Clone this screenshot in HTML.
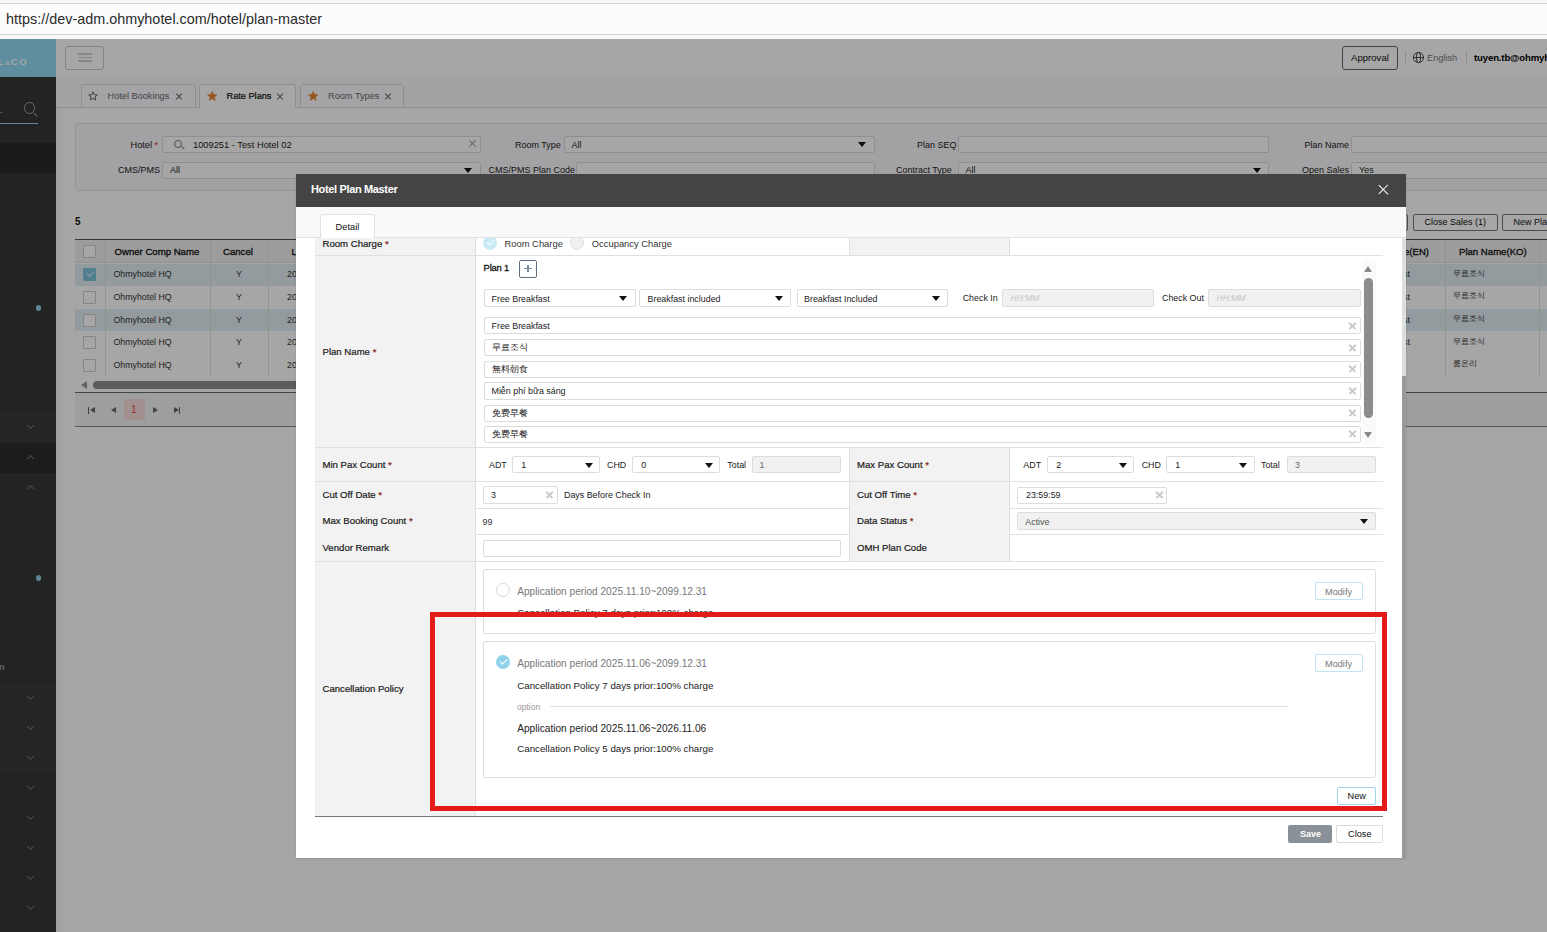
<!DOCTYPE html>
<html><head><meta charset="utf-8">
<style>
*{box-sizing:border-box;margin:0;padding:0}
html,body{width:1547px;height:932px;overflow:hidden;background:#fff;font-family:"Liberation Sans",sans-serif;color:#222}
.a{position:absolute}
.t{position:absolute;white-space:nowrap;line-height:1}
.inp{position:absolute;background:#fff;border:1px solid #dcdcdc;border-radius:2px}
.lb{-webkit-text-stroke:0.2px #1a1a1a;color:#1a1a1a}
.req{color:#e02020}
.tri{position:absolute;width:0;height:0;border-left:4.3px solid transparent;border-right:4.3px solid transparent;border-top:5.6px solid #111;margin-top:0.5px}
</style></head><body>

<!-- APP (background, dimmed by overlay) -->
<div id="app" class="a" style="left:0;top:0;width:1547px;height:932px;background:#fff;overflow:hidden">
<!-- sidebar -->
<div class="a" style="left:0;top:39px;width:56px;height:893px;background:#363636"></div>
<div class="a" style="left:0;top:39px;width:56px;height:38px;background:#92dbf3"></div>
<div class="t" style="left:-2px;top:56.5px;font-size:9.6px;font-weight:700;color:#fafcfd;letter-spacing:1.6px">L<span style="font-size:6px;letter-spacing:1px">&amp;</span>CO</div>
<div class="a" style="left:0;top:123px;width:38px;height:1.3px;background:#8fd0e6"></div>
<div class="a" style="left:23.8px;top:102px;width:11.5px;height:11.5px;border:1.2px solid #a0a0a0;border-radius:50%"></div><div class="a" style="left:0;top:111.5px;width:3px;height:1px;background:#777"></div>
<div class="a" style="left:35px;top:111.5px;width:1.2px;height:5px;background:#a0a0a0;transform:rotate(-45deg)"></div>
<div class="a" style="left:0;top:143px;width:56px;height:30px;background:#2a2a2a"></div>
<div class="a" style="left:35.5px;top:305px;width:5px;height:5.5px;border-radius:50%;background:#8fcde3"></div>
<div class="a" style="left:0;top:413px;width:56px;height:30px;background:#3a3a3a"></div>
<div class="a" style="left:0;top:443px;width:56px;height:30px;background:#2b2b2b"></div>
<div class="a" style="left:35.5px;top:575px;width:5px;height:5.5px;border-radius:50%;background:#8fcde3"></div>
<div class="t" style="left:-1px;top:663px;font-size:9px;font-weight:700;color:#999">n</div>
<div class="a" style="left:0;top:683px;width:56px;height:90px;background:#393939"></div>
<div class="a" style="left:28px;top:423.3px;width:5px;height:5px;border-right:1.2px solid #777;border-bottom:1.2px solid #777;transform:rotate(45deg)"></div>
<div class="a" style="left:28px;top:455.5px;width:5px;height:5px;border-left:1.2px solid #777;border-top:1.2px solid #777;transform:rotate(45deg)"></div>
<div class="a" style="left:28px;top:485.5px;width:5px;height:5px;border-left:1.2px solid #777;border-top:1.2px solid #777;transform:rotate(45deg)"></div>
<div class="a" style="left:28px;top:693.5px;width:5px;height:5px;border-right:1.2px solid #777;border-bottom:1.2px solid #777;transform:rotate(45deg)"></div>
<div class="a" style="left:28px;top:723.5px;width:5px;height:5px;border-right:1.2px solid #777;border-bottom:1.2px solid #777;transform:rotate(45deg)"></div>
<div class="a" style="left:28px;top:753.5px;width:5px;height:5px;border-right:1.2px solid #777;border-bottom:1.2px solid #777;transform:rotate(45deg)"></div>
<div class="a" style="left:28px;top:783.5px;width:5px;height:5px;border-right:1.2px solid #777;border-bottom:1.2px solid #777;transform:rotate(45deg)"></div>
<div class="a" style="left:28px;top:813.5px;width:5px;height:5px;border-right:1.2px solid #777;border-bottom:1.2px solid #777;transform:rotate(45deg)"></div>
<div class="a" style="left:28px;top:843.5px;width:5px;height:5px;border-right:1.2px solid #777;border-bottom:1.2px solid #777;transform:rotate(45deg)"></div>
<div class="a" style="left:28px;top:873.5px;width:5px;height:5px;border-right:1.2px solid #777;border-bottom:1.2px solid #777;transform:rotate(45deg)"></div>
<div class="a" style="left:28px;top:903.5px;width:5px;height:5px;border-right:1.2px solid #777;border-bottom:1.2px solid #777;transform:rotate(45deg)"></div>
<div class="a" style="left:56px;top:77px;width:8px;height:855px;background:linear-gradient(90deg,rgba(0,0,0,0.04),rgba(0,0,0,0))"></div>

<!-- header -->
<div class="a" style="left:65px;top:46px;width:39px;height:24px;border:1px solid #c9c9c9;border-radius:3px"></div>
<div class="a" style="left:78px;top:53px;width:14px;height:1.5px;background:#d0d0d0"></div>
<div class="a" style="left:78px;top:56.6px;width:14px;height:1.5px;background:#d0d0d0"></div>
<div class="a" style="left:78px;top:60.2px;width:14px;height:1.5px;background:#d0d0d0"></div>
<div class="a" style="left:1342px;top:46px;width:56px;height:24px;border:1px solid #666;border-radius:3px"></div>
<div class="t" style="left:1351px;top:53px;font-size:9.6px;color:#111">Approval</div>
<div class="a" style="left:1405px;top:51px;width:1px;height:13px;background:#ddd"></div>
<div class="a" style="left:1413px;top:52px;width:10.5px;height:10.5px;border:1px solid #4a4a4a;border-radius:50%"></div>
<div class="a" style="left:1416px;top:52px;width:4.5px;height:10.5px;border:1px solid #4a4a4a;border-radius:50%"></div>
<div class="a" style="left:1413px;top:56.8px;width:10.5px;height:1px;background:#4a4a4a"></div>
<div class="t" style="left:1427px;top:54px;font-size:9.2px;color:#777">English</div>
<div class="a" style="left:1466px;top:51px;width:1px;height:13px;background:#ddd"></div>
<div class="t" style="left:1474px;top:53px;font-size:9.6px;font-weight:700;color:#000;letter-spacing:-0.15px">tuyen.tb@ohmyhotel.com</div>

<!-- tab bar -->
<div class="a" style="left:57px;top:77px;width:1490px;height:31px;background:#fbf9fc;border-bottom:1px solid #dcdcdc"></div>
<div class="a" style="left:81px;top:84px;width:114.5px;height:24px;background:#fcfbfd;border:1px solid #dcdcdc;border-radius:3px 3px 0 0"></div>
<div class="a" style="left:199px;top:84px;width:97px;height:24px;background:#fff;border:1px solid #dcdcdc;border-bottom:none;border-radius:3px 3px 0 0"></div>
<div class="a" style="left:300px;top:84px;width:104px;height:24px;background:#fcfbfd;border:1px solid #dcdcdc;border-radius:3px 3px 0 0"></div>
<svg class="a" style="left:88px;top:91px" width="10" height="10" viewBox="-0.5 -0.5 11 11"><path d="M5.00,0.40 L6.29,3.62 L9.76,3.85 L7.09,6.08 L7.94,9.45 L5.00,7.60 L2.06,9.45 L2.91,6.08 L0.24,3.85 L3.71,3.62Z" fill="none" stroke="#5a5a5a" stroke-width="1" stroke-linejoin="round"/></svg>
<div class="t" style="left:107.5px;top:92px;font-size:9.2px;color:#6a6a72">Hotel Bookings</div>
<div class="a" style="left:174.5px;top:96.2px;width:8px;height:1px;background:#6a6a6a;transform:rotate(45deg)"></div><div class="a" style="left:174.5px;top:96.2px;width:8px;height:1px;background:#6a6a6a;transform:rotate(-45deg)"></div>
<svg class="a" style="left:206.5px;top:91px" width="10.5" height="10" viewBox="0 0 10 10"><path d="M5.00,0.40 L6.29,3.62 L9.76,3.85 L7.09,6.08 L7.94,9.45 L5.00,7.60 L2.06,9.45 L2.91,6.08 L0.24,3.85 L3.71,3.62Z" fill="#e8812f" stroke="#e8812f" stroke-width="0.6" stroke-linejoin="round"/></svg>
<div class="t" style="left:226.5px;top:92px;font-size:9.2px;color:#111;-webkit-text-stroke:0.2px #111">Rate Plans</div>
<div class="a" style="left:275.5px;top:96.2px;width:8px;height:1px;background:#6a6a6a;transform:rotate(45deg)"></div><div class="a" style="left:275.5px;top:96.2px;width:8px;height:1px;background:#6a6a6a;transform:rotate(-45deg)"></div>
<svg class="a" style="left:307.5px;top:91px" width="10.5" height="10" viewBox="0 0 10 10"><path d="M5.00,0.40 L6.29,3.62 L9.76,3.85 L7.09,6.08 L7.94,9.45 L5.00,7.60 L2.06,9.45 L2.91,6.08 L0.24,3.85 L3.71,3.62Z" fill="#e8812f" stroke="#e8812f" stroke-width="0.6" stroke-linejoin="round"/></svg>
<div class="t" style="left:328px;top:92px;font-size:9.2px;color:#6a6a72">Room Types</div>
<div class="a" style="left:383.5px;top:96.2px;width:8px;height:1px;background:#6a6a6a;transform:rotate(45deg)"></div><div class="a" style="left:383.5px;top:96.2px;width:8px;height:1px;background:#6a6a6a;transform:rotate(-45deg)"></div>

<!-- filter panel -->
<div class="a" style="left:75px;top:123px;width:1500px;height:68px;background:#f9f7fa;border:1px solid #e2e2e2;border-radius:4px"></div>
<div class="t" style="left:130.5px;top:141px;font-size:9.2px;color:#222">Hotel <span class="req">*</span></div>
<div class="inp" style="left:162px;top:135.5px;width:319px;height:17.5px"></div>
<div class="a" style="left:174px;top:139.5px;width:8px;height:8px;border:1px solid #777;border-radius:50%"></div><div class="a" style="left:180.5px;top:147px;width:3.5px;height:1px;background:#777;transform:rotate(45deg)"></div>
<div class="t" style="left:193px;top:141px;font-size:9.3px;color:#222">1009251 - Test Hotel 02</div>
<div class="a" style="left:468.0px;top:143.3px;width:9px;height:1.4px;background:#999;transform:rotate(45deg)"></div><div class="a" style="left:468.0px;top:143.3px;width:9px;height:1.4px;background:#999;transform:rotate(-45deg)"></div>
<div class="t" style="left:118px;top:165.5px;font-size:9px;color:#222">CMS/PMS</div>
<div class="inp" style="left:162px;top:161.5px;width:319px;height:17.5px"></div>
<div class="t" style="left:170px;top:165.5px;font-size:9px;color:#222">All</div>
<div class="tri" style="left:464px;top:167px"></div>
<div class="t" style="left:515px;top:141px;font-size:9px;color:#222">Room Type</div>
<div class="inp" style="left:563.5px;top:135.5px;width:311px;height:17.5px"></div>
<div class="t" style="left:571.5px;top:141px;font-size:9px;color:#222">All</div>
<div class="tri" style="left:858px;top:141px"></div>
<div class="t" style="left:488.5px;top:165.5px;font-size:9px;color:#222">CMS/PMS Plan Code</div>
<div class="inp" style="left:576px;top:161.5px;width:299px;height:17.5px"></div>
<div class="t" style="left:917px;top:141px;font-size:9px;color:#222">Plan SEQ</div>
<div class="inp" style="left:957.5px;top:135.5px;width:311px;height:17.5px"></div>
<div class="t" style="left:896px;top:165.5px;font-size:9px;color:#222">Contract Type</div>
<div class="inp" style="left:957.5px;top:161.5px;width:311px;height:17.5px"></div>
<div class="t" style="left:965.5px;top:165.5px;font-size:9px;color:#222">All</div>
<div class="tri" style="left:1253px;top:167px"></div>
<div class="t" style="left:1304.5px;top:141px;font-size:9px;color:#222">Plan Name</div>
<div class="inp" style="left:1350.5px;top:135.5px;width:300px;height:17.5px"></div>
<div class="t" style="left:1302px;top:165.5px;font-size:9px;color:#222">Open Sales</div>
<div class="inp" style="left:1350.5px;top:161.5px;width:300px;height:17.5px"></div>
<div class="t" style="left:1359px;top:165.5px;font-size:9px;color:#222">Yes</div>

<!-- count + buttons -->
<div class="t" style="left:75px;top:216.5px;font-size:10px;font-weight:700;color:#111">5</div>
<div class="a" style="left:1350px;top:213.5px;width:58px;height:17.5px;border:1px solid #777;border-radius:2px"></div>
<div class="a" style="left:1413px;top:213.5px;width:85px;height:17.5px;border:1px solid #777;border-radius:2px"></div>
<div class="t" style="left:1424.5px;top:217.5px;font-size:9px;color:#111">Close Sales (1)</div>
<div class="a" style="left:1502px;top:213.5px;width:80px;height:17.5px;border:1px solid #777;border-radius:2px"></div>
<div class="t" style="left:1513.5px;top:217.5px;font-size:9px;color:#111">New Plan</div>

<!-- table -->
<div class="a" style="left:75px;top:239px;width:1480px;height:1.2px;background:#555"></div>
<div class="a" style="left:75px;top:240.2px;width:1480px;height:23.3px;background:#f0f0f0;border-bottom:1px solid #e2e2e2"></div>
<div class="a" style="left:75px;top:263.5px;width:1480px;height:22.6px;background:#e3eff4"></div>
<div class="a" style="left:83px;top:268.3px;width:13px;height:13px;background:#7fc3dc;border-radius:1px"></div>
<div class="a" style="left:86.5px;top:270.8px;width:7px;height:4px;border-left:1.3px solid #dff3fa;border-bottom:1.3px solid #dff3fa;transform:rotate(-45deg)"></div>
<div class="t" style="left:113.5px;top:270.3px;font-size:8.8px;color:#333">Ohmyhotel HQ</div>
<div class="t" style="left:236px;top:270.3px;font-size:8.8px;color:#333">Y</div>
<div class="t" style="left:287px;top:270.3px;font-size:8.8px;color:#333">20</div>
<div class="t" style="left:1403px;top:270.3px;font-size:8.8px;color:#333">st</div>
<div class="t" style="left:1453px;top:269.8px;font-size:8.2px;color:#333">무료조식</div>
<div class="a" style="left:75px;top:286.1px;width:1480px;height:22.6px;background:#fff"></div>
<div class="a" style="left:83px;top:290.90000000000003px;width:13px;height:13px;border:1px solid #ccc;background:#fff;border-radius:1px"></div>
<div class="t" style="left:113.5px;top:292.90000000000003px;font-size:8.8px;color:#333">Ohmyhotel HQ</div>
<div class="t" style="left:236px;top:292.90000000000003px;font-size:8.8px;color:#333">Y</div>
<div class="t" style="left:287px;top:292.90000000000003px;font-size:8.8px;color:#333">20</div>
<div class="t" style="left:1403px;top:292.90000000000003px;font-size:8.8px;color:#333">st</div>
<div class="t" style="left:1453px;top:292.40000000000003px;font-size:8.2px;color:#333">무료조식</div>
<div class="a" style="left:75px;top:308.7px;width:1480px;height:22.6px;background:#e3eff4"></div>
<div class="a" style="left:83px;top:313.5px;width:13px;height:13px;border:1px solid #ccc;background:#fff;border-radius:1px"></div>
<div class="t" style="left:113.5px;top:315.5px;font-size:8.8px;color:#333">Ohmyhotel HQ</div>
<div class="t" style="left:236px;top:315.5px;font-size:8.8px;color:#333">Y</div>
<div class="t" style="left:287px;top:315.5px;font-size:8.8px;color:#333">20</div>
<div class="t" style="left:1403px;top:315.5px;font-size:8.8px;color:#333">st</div>
<div class="t" style="left:1453px;top:315.0px;font-size:8.2px;color:#333">무료조식</div>
<div class="a" style="left:75px;top:331.3px;width:1480px;height:22.6px;background:#fff"></div>
<div class="a" style="left:83px;top:336.1px;width:13px;height:13px;border:1px solid #ccc;background:#fff;border-radius:1px"></div>
<div class="t" style="left:113.5px;top:338.1px;font-size:8.8px;color:#333">Ohmyhotel HQ</div>
<div class="t" style="left:236px;top:338.1px;font-size:8.8px;color:#333">Y</div>
<div class="t" style="left:287px;top:338.1px;font-size:8.8px;color:#333">20</div>
<div class="t" style="left:1403px;top:338.1px;font-size:8.8px;color:#333">st</div>
<div class="t" style="left:1453px;top:337.6px;font-size:8.2px;color:#333">무료조식</div>
<div class="a" style="left:75px;top:353.9px;width:1480px;height:22.6px;background:#fff"></div>
<div class="a" style="left:83px;top:358.7px;width:13px;height:13px;border:1px solid #ccc;background:#fff;border-radius:1px"></div>
<div class="t" style="left:113.5px;top:360.7px;font-size:8.8px;color:#333">Ohmyhotel HQ</div>
<div class="t" style="left:236px;top:360.7px;font-size:8.8px;color:#333">Y</div>
<div class="t" style="left:287px;top:360.7px;font-size:8.8px;color:#333">20</div>
<div class="t" style="left:1403px;top:360.7px;font-size:8.8px;color:#333"></div>
<div class="t" style="left:1453px;top:360.2px;font-size:8.2px;color:#333">룸온리</div>
<div class="a" style="left:105px;top:240px;width:1px;height:136px;background:#e0e0e0"></div>
<div class="a" style="left:210px;top:240px;width:1px;height:136px;background:#e0e0e0"></div>
<div class="a" style="left:268px;top:240px;width:1px;height:136px;background:#e0e0e0"></div>
<div class="a" style="left:1445px;top:240px;width:1px;height:136px;background:#e0e0e0"></div>
<div class="a" style="left:1539px;top:240px;width:1px;height:136px;background:#e0e0e0"></div>
<div class="t" style="left:114.5px;top:246.5px;font-size:9.6px;color:#111;-webkit-text-stroke:0.3px #111">Owner Comp Name</div>
<div class="t" style="left:223px;top:246.5px;font-size:9.6px;color:#111;-webkit-text-stroke:0.3px #111">Cancel</div>
<div class="t" style="left:291.5px;top:246.5px;font-size:9.6px;color:#111;-webkit-text-stroke:0.3px #111">L</div>
<div class="t" style="left:1404px;top:246.5px;font-size:9.6px;color:#111;-webkit-text-stroke:0.3px #111">e(EN)</div>
<div class="t" style="left:1459px;top:246.5px;font-size:9.6px;color:#111;-webkit-text-stroke:0.3px #111">Plan Name(KO)</div>
<div class="a" style="left:83px;top:245px;width:13px;height:13px;border:1px solid #ccc;background:#fff;border-radius:1px"></div>
<!-- scrollbar -->
<div class="a" style="left:81px;top:380.5px;width:0;height:0;border-top:4px solid transparent;border-bottom:4px solid transparent;border-right:6px solid #999"></div>
<div class="a" style="left:93px;top:380.8px;width:1250px;height:8px;border-radius:4px;background:#8e8e8e"></div>
<!-- pager -->
<div class="a" style="left:75px;top:392px;width:1480px;height:34.5px;background:#f3f3f3;border-top:1.5px solid #6a6a6a;border-bottom:1.5px solid #8a8a8a"></div>
<div class="a" style="left:88px;top:407px;width:1.3px;height:7px;background:#666"></div>
<div class="a" style="left:89.5px;top:407px;width:0;height:0;border-top:3.5px solid transparent;border-bottom:3.5px solid transparent;border-right:5px solid #666"></div>
<div class="a" style="left:111px;top:407px;width:0;height:0;border-top:3.5px solid transparent;border-bottom:3.5px solid transparent;border-right:5px solid #666"></div>
<div class="a" style="left:123.9px;top:399px;width:21px;height:21px;background:#f6dede"></div>
<div class="t" style="left:131px;top:405px;font-size:10px;color:#e84a3a">1</div>
<div class="a" style="left:153px;top:407px;width:0;height:0;border-top:3.5px solid transparent;border-bottom:3.5px solid transparent;border-left:5px solid #666"></div>
<div class="a" style="left:174px;top:407px;width:0;height:0;border-top:3.5px solid transparent;border-bottom:3.5px solid transparent;border-left:5px solid #666"></div>
<div class="a" style="left:179px;top:407px;width:1.3px;height:7px;background:#666"></div>

</div>

<!-- overlay -->
<div class="a" style="left:0;top:39px;width:1547px;height:893px;background:rgba(0,0,0,0.35)"></div>

<!-- browser url bar -->
<div class="a" style="left:0;top:0;width:1547px;height:39px;background:#f7f7f7"></div>
<div class="a" style="left:0;top:3px;width:1547px;height:32px;background:#fcfcfc;border-top:1px solid #d2d2d2;border-bottom:1px solid #d2d2d2"></div>
<div class="t" style="left:6px;top:12px;font-size:14.4px;color:#2a2a2a">https://dev-adm.ohmyhotel.com/hotel/plan-master</div>

<!-- MODAL -->
<div id="modal" class="a" style="left:296px;top:174px;width:1110px;height:684px;background:#fff;overflow:hidden;box-shadow:0 1px 2px rgba(0,0,0,0.12)">
<div class="a" style="left:-296px;top:-174px;width:1547px;height:932px">
<!-- header -->
<div class="a" style="left:296px;top:174px;width:1110px;height:33px;background:#444"></div>
<div class="t" style="left:311px;top:184px;font-size:11px;font-weight:700;color:#fff;letter-spacing:-0.35px">Hotel Plan Master</div>
<div class="a" style="left:1377px;top:189.45px;width:12.5px;height:1.1px;background:#fff;transform:rotate(45deg)"></div>
<div class="a" style="left:1377px;top:189.45px;width:12.5px;height:1.1px;background:#fff;transform:rotate(-45deg)"></div>
<!-- tab strip -->
<div class="a" style="left:296px;top:207px;width:1110px;height:30.5px;background:#f9f8fb;border-bottom:1px solid #e2e2e2"></div>
<div class="a" style="left:319.8px;top:214.3px;width:54.9px;height:23.5px;background:#fff;border:1px solid #e2e2e2;border-bottom:none;border-radius:3px 3px 0 0"></div>
<div class="t" style="left:335.5px;top:223.2px;font-size:9.3px;color:#111">Detail</div>

<!-- modal scrollbar -->
<div class="a" style="left:1402px;top:237.5px;width:4px;height:139px;background:#dedede"></div>
<div class="a" style="left:1402px;top:376px;width:4px;height:482px;background:#999"></div>

<!-- content table (clipped region below tab strip) -->
<div class="a" style="left:296px;top:237.5px;width:1106px;height:620.5px;overflow:hidden">
<div class="a" style="left:-296px;top:-237.5px;width:1547px;height:932px">

<!-- Room charge row -->
<div class="a" style="left:315px;top:230px;width:160px;height:25.3px;background:#f2f2f2"></div>
<div class="a" style="left:849.5px;top:230px;width:160px;height:25.3px;background:#f2f2f2"></div>
<div class="a" style="left:475px;top:230px;width:1px;height:25.3px;background:#e0e0e0"></div>
<div class="a" style="left:849px;top:230px;width:1px;height:25.3px;background:#e0e0e0"></div>
<div class="a" style="left:1009px;top:230px;width:1px;height:25.3px;background:#e0e0e0"></div>
<div class="a" style="left:315px;top:255px;width:1068px;height:1px;background:#e0e0e0"></div>
<div class="t lb" style="left:322.5px;top:239px;font-size:9.6px">Room Charge <span class="req">*</span></div>
<div class="a" style="left:483px;top:236.4px;width:14px;height:14px;border-radius:50%;background:#c7eaf5"></div>
<div class="a" style="left:487px;top:239.8px;width:6.5px;height:3.5px;border-left:1.3px solid #fff;border-bottom:1.3px solid #fff;transform:rotate(-45deg)"></div>
<div class="t" style="left:504.5px;top:239px;font-size:9.4px;color:#333">Room Charge</div>
<div class="a" style="left:570.4px;top:236.4px;width:14px;height:14px;border-radius:50%;background:#f0f0f0;border:1px solid #e2e2e2"></div>
<div class="t" style="left:591.8px;top:239px;font-size:9.4px;color:#333">Occupancy Charge</div>

<!-- Plan name row -->
<div class="a" style="left:315px;top:255.5px;width:160px;height:192px;background:#f2f2f2"></div>
<div class="a" style="left:475px;top:255.5px;width:1px;height:192px;background:#e0e0e0"></div>
<div class="a" style="left:315px;top:447px;width:1068px;height:1px;background:#e0e0e0"></div>
<div class="t lb" style="left:322.5px;top:347px;font-size:9.6px">Plan Name <span class="req">*</span></div>
<div class="t" style="left:483.6px;top:263.2px;font-size:9.4px;color:#111;-webkit-text-stroke:0.3px #111;letter-spacing:-0.2px">Plan 1</div>
<div class="a" style="left:519px;top:260px;width:18px;height:18px;border:1px solid #5f6f7f;border-radius:2px"></div>
<div class="a" style="left:524.2px;top:267.6px;width:7.4px;height:1.5px;background:#7a8c9f"></div>
<div class="a" style="left:527.15px;top:264.65px;width:1.5px;height:7.4px;background:#7a8c9f"></div>

<div class="inp" style="left:483.6px;top:289.3px;width:152px;height:17.3px"></div>
<div class="t" style="left:491.5px;top:295px;font-size:8.9px;color:#222">Free Breakfast</div>
<div class="tri" style="left:619px;top:295px"></div>
<div class="inp" style="left:639.3px;top:289.3px;width:152px;height:17.3px"></div>
<div class="t" style="left:647.5px;top:295px;font-size:8.9px;color:#222">Breakfast included</div>
<div class="tri" style="left:775px;top:295px"></div>
<div class="inp" style="left:796.5px;top:289.3px;width:151px;height:17.3px"></div>
<div class="t" style="left:804px;top:295px;font-size:8.9px;color:#222">Breakfast Included</div>
<div class="tri" style="left:931.5px;top:295px"></div>
<div class="t" style="left:962.7px;top:293.5px;font-size:8.9px;color:#222">Check In</div>
<div class="inp" style="left:1002.2px;top:289.3px;width:151.6px;height:17.5px;background:#f1f1f1"></div>
<div class="t" style="left:1010.5px;top:294px;font-size:8.5px;color:#c4c4c4;font-style:italic">HH:MM</div>
<div class="t" style="left:1162px;top:293.5px;font-size:8.9px;color:#222">Check Out</div>
<div class="inp" style="left:1208.2px;top:289.3px;width:152.4px;height:17.5px;background:#f1f1f1"></div>
<div class="t" style="left:1216.5px;top:294px;font-size:8.5px;color:#c4c4c4;font-style:italic">HH:MM</div>
<div class="inp" style="left:483.6px;top:317.3px;width:877px;height:17.2px"></div>
<div class="t" style="left:491.5px;top:321.6px;font-size:8.9px;color:#222">Free Breakfast</div>
<div class="a" style="left:1348.20px;top:325.00px;width:9px;height:1.6px;background:#cacaca;transform:rotate(45deg)"></div>
<div class="a" style="left:1348.20px;top:325.00px;width:9px;height:1.6px;background:#cacaca;transform:rotate(-45deg)"></div>
<div class="inp" style="left:483.6px;top:338.8px;width:877px;height:17.2px"></div>
<div class="t" style="left:491.5px;top:343.1px;font-size:8.9px;color:#222">무료조식</div>
<div class="a" style="left:1348.20px;top:346.50px;width:9px;height:1.6px;background:#cacaca;transform:rotate(45deg)"></div>
<div class="a" style="left:1348.20px;top:346.50px;width:9px;height:1.6px;background:#cacaca;transform:rotate(-45deg)"></div>
<div class="inp" style="left:483.6px;top:360.5px;width:877px;height:17.2px"></div>
<div class="t" style="left:491.5px;top:364.8px;font-size:8.9px;color:#222">無料朝食</div>
<div class="a" style="left:1348.20px;top:368.20px;width:9px;height:1.6px;background:#cacaca;transform:rotate(45deg)"></div>
<div class="a" style="left:1348.20px;top:368.20px;width:9px;height:1.6px;background:#cacaca;transform:rotate(-45deg)"></div>
<div class="inp" style="left:483.6px;top:382.4px;width:877px;height:17.2px"></div>
<div class="t" style="left:491.5px;top:386.7px;font-size:8.9px;color:#222">Miễn phí bữa sáng</div>
<div class="a" style="left:1348.20px;top:390.10px;width:9px;height:1.6px;background:#cacaca;transform:rotate(45deg)"></div>
<div class="a" style="left:1348.20px;top:390.10px;width:9px;height:1.6px;background:#cacaca;transform:rotate(-45deg)"></div>
<div class="inp" style="left:483.6px;top:404.5px;width:877px;height:17.2px"></div>
<div class="t" style="left:491.5px;top:408.8px;font-size:8.9px;color:#222">免费早餐</div>
<div class="a" style="left:1348.20px;top:412.20px;width:9px;height:1.6px;background:#cacaca;transform:rotate(45deg)"></div>
<div class="a" style="left:1348.20px;top:412.20px;width:9px;height:1.6px;background:#cacaca;transform:rotate(-45deg)"></div>
<div class="inp" style="left:483.6px;top:425.5px;width:877px;height:17.2px"></div>
<div class="t" style="left:491.5px;top:429.8px;font-size:8.9px;color:#222">免费早餐</div>
<div class="a" style="left:1348.20px;top:433.20px;width:9px;height:1.6px;background:#cacaca;transform:rotate(45deg)"></div>
<div class="a" style="left:1348.20px;top:433.20px;width:9px;height:1.6px;background:#cacaca;transform:rotate(-45deg)"></div>
<!-- inner scrollbar -->
<div class="a" style="left:1361.5px;top:259.5px;width:14px;height:184.5px;background:#fafafa"></div>
<div class="a" style="left:1364.3px;top:265.5px;width:0;height:0;border-left:4.1px solid transparent;border-right:4.1px solid transparent;border-bottom:6px solid #888"></div>
<div class="a" style="left:1364.1px;top:278.3px;width:8.8px;height:139.5px;border-radius:4.4px;background:#8c8c8c"></div>
<div class="a" style="left:1364.3px;top:431.9px;width:0;height:0;border-left:4.1px solid transparent;border-right:4.1px solid transparent;border-top:6px solid #888"></div>

<!-- 4-col rows -->
<div class="a" style="left:315px;top:447.5px;width:160px;height:34.0px;background:#f2f2f2"></div>
<div class="a" style="left:849.5px;top:447.5px;width:160px;height:34.0px;background:#f2f2f2"></div>
<div class="a" style="left:475px;top:447.5px;width:1px;height:34.0px;background:#e0e0e0"></div>
<div class="a" style="left:849px;top:447.5px;width:1px;height:34.0px;background:#e0e0e0"></div>
<div class="a" style="left:1009px;top:447.5px;width:1px;height:34.0px;background:#e0e0e0"></div>
<div class="a" style="left:315px;top:481.0px;width:1068px;height:1px;background:#e0e0e0"></div>
<div class="a" style="left:315px;top:481.5px;width:160px;height:26.80000000000001px;background:#f2f2f2"></div>
<div class="a" style="left:849.5px;top:481.5px;width:160px;height:26.80000000000001px;background:#f2f2f2"></div>
<div class="a" style="left:475px;top:481.5px;width:1px;height:26.80000000000001px;background:#e0e0e0"></div>
<div class="a" style="left:849px;top:481.5px;width:1px;height:26.80000000000001px;background:#e0e0e0"></div>
<div class="a" style="left:1009px;top:481.5px;width:1px;height:26.80000000000001px;background:#e0e0e0"></div>
<div class="a" style="left:315px;top:507.8px;width:1068px;height:1px;background:#e0e0e0"></div>
<div class="a" style="left:315px;top:508.3px;width:160px;height:26.099999999999966px;background:#f2f2f2"></div>
<div class="a" style="left:849.5px;top:508.3px;width:160px;height:26.099999999999966px;background:#f2f2f2"></div>
<div class="a" style="left:475px;top:508.3px;width:1px;height:26.099999999999966px;background:#e0e0e0"></div>
<div class="a" style="left:849px;top:508.3px;width:1px;height:26.099999999999966px;background:#e0e0e0"></div>
<div class="a" style="left:1009px;top:508.3px;width:1px;height:26.099999999999966px;background:#e0e0e0"></div>
<div class="a" style="left:315px;top:533.9px;width:1068px;height:1px;background:#e0e0e0"></div>
<div class="a" style="left:315px;top:534.4px;width:160px;height:27.0px;background:#f2f2f2"></div>
<div class="a" style="left:849.5px;top:534.4px;width:160px;height:27.0px;background:#f2f2f2"></div>
<div class="a" style="left:475px;top:534.4px;width:1px;height:27.0px;background:#e0e0e0"></div>
<div class="a" style="left:849px;top:534.4px;width:1px;height:27.0px;background:#e0e0e0"></div>
<div class="a" style="left:1009px;top:534.4px;width:1px;height:27.0px;background:#e0e0e0"></div>
<div class="a" style="left:315px;top:560.9px;width:1068px;height:1px;background:#e0e0e0"></div>
<div class="t lb" style="left:322.5px;top:459.5px;font-size:9.6px">Min Pax Count <span class=req>*</span></div>
<div class="t" style="left:489px;top:461.0px;font-size:8.9px;color:#222">ADT</div>
<div class="inp" style="left:512.3px;top:456.3px;width:88.2px;height:17.2px;background:#fff"></div><div class="t" style="left:521.3px;top:460.8px;font-size:8.9px;color:#222">1</div><div class="tri" style="left:584.5px;top:462.3px"></div>
<div class="t" style="left:607px;top:461.0px;font-size:8.9px;color:#222">CHD</div>
<div class="inp" style="left:632.3px;top:456.3px;width:88.2px;height:17.2px;background:#fff"></div><div class="t" style="left:641.3px;top:460.8px;font-size:8.9px;color:#222">0</div><div class="tri" style="left:704.5px;top:462.3px"></div>
<div class="t" style="left:727.3px;top:461.0px;font-size:8.9px;color:#222">Total</div>
<div class="inp" style="left:752.3px;top:456.3px;width:88.4px;height:17.2px;background:#f1f1f1"></div><div class="t" style="left:759.5px;top:461.0px;font-size:8.9px;color:#666">1</div>
<div class="t lb" style="left:857px;top:459.5px;font-size:9.6px">Max Pax Count <span class=req>*</span></div>
<div class="t" style="left:1023.3px;top:461.0px;font-size:8.9px;color:#222">ADT</div>
<div class="inp" style="left:1047.3px;top:456.3px;width:87.2px;height:17.2px;background:#fff"></div><div class="t" style="left:1056.3px;top:460.8px;font-size:8.9px;color:#222">2</div><div class="tri" style="left:1118.5px;top:462.3px"></div>
<div class="t" style="left:1141.7px;top:461.0px;font-size:8.9px;color:#222">CHD</div>
<div class="inp" style="left:1166.3px;top:456.3px;width:88.4px;height:17.2px;background:#fff"></div><div class="t" style="left:1175.3px;top:460.8px;font-size:8.9px;color:#222">1</div><div class="tri" style="left:1238.7px;top:462.3px"></div>
<div class="t" style="left:1261px;top:461.0px;font-size:8.9px;color:#222">Total</div>
<div class="inp" style="left:1287px;top:456.3px;width:88.7px;height:17.2px;background:#f1f1f1"></div><div class="t" style="left:1295px;top:461.0px;font-size:8.9px;color:#666">3</div>
<div class="t lb" style="left:322.5px;top:489.5px;font-size:9.6px">Cut Off Date <span class=req>*</span></div>
<div class="inp" style="left:483.2px;top:486.3px;width:74.4px;height:17.3px"></div><div class="t" style="left:491px;top:491.0px;font-size:8.9px;color:#222">3</div>
<div class="a" style="left:545.00px;top:494.20px;width:9px;height:1.6px;background:#cacaca;transform:rotate(45deg)"></div><div class="a" style="left:545.00px;top:494.20px;width:9px;height:1.6px;background:#cacaca;transform:rotate(-45deg)"></div>
<div class="t" style="left:564px;top:491.0px;font-size:8.9px;color:#222">Days Before Check In</div>
<div class="t lb" style="left:857px;top:489.5px;font-size:9.6px">Cut Off Time <span class=req>*</span></div>
<div class="inp" style="left:1017.3px;top:486.5px;width:150.2px;height:17px"></div><div class="t" style="left:1026px;top:491.0px;font-size:8.9px;color:#222">23:59:59</div>
<div class="a" style="left:1155.00px;top:494.20px;width:9px;height:1.6px;background:#cacaca;transform:rotate(45deg)"></div><div class="a" style="left:1155.00px;top:494.20px;width:9px;height:1.6px;background:#cacaca;transform:rotate(-45deg)"></div>
<div class="t lb" style="left:322.5px;top:516px;font-size:9.6px">Max Booking Count <span class=req>*</span></div>
<div class="t" style="left:482.6px;top:517.5px;font-size:8.9px;color:#333">99</div>
<div class="t lb" style="left:857px;top:516px;font-size:9.6px">Data Status <span class=req>*</span></div>
<div class="inp" style="left:1017.3px;top:512.4px;width:358.4px;height:17.2px;background:#f1f1f1"></div><div class="t" style="left:1025.3px;top:517.9px;font-size:8.9px;color:#555">Active</div><div class="tri" style="left:1359.6999999999998px;top:518.4px"></div>
<div class="t lb" style="left:322.5px;top:542.5px;font-size:9.6px">Vendor Remark</div>
<div class="inp" style="left:483.2px;top:539.6px;width:357.5px;height:17px"></div>
<div class="t lb" style="left:857px;top:542.5px;font-size:9.6px">OMH Plan Code</div>

<!-- cancellation policy row -->
<div class="a" style="left:315px;top:561.5px;width:160px;height:255px;background:#f2f2f2"></div>
<div class="a" style="left:475px;top:561.5px;width:1px;height:255px;background:#e0e0e0"></div>
<div class="t lb" style="left:322.5px;top:684px;font-size:9.6px">Cancellation Policy</div>
<div class="a" style="left:315px;top:815.5px;width:1068px;height:1.3px;background:#777"></div>

<!-- card 1 -->
<div class="a" style="left:483px;top:569px;width:893px;height:64.5px;border:1px solid #dedede;border-radius:2px"></div>
<div class="a" style="left:495.7px;top:583.4px;width:14px;height:14px;border-radius:50%;border:1px solid #d8d8d8;background:#fff"></div>
<div class="t" style="left:517.2px;top:586.7px;font-size:10.15px;color:#777">Application period 2025.11.10~2099.12.31</div>
<div class="t" style="left:517.2px;top:607.7px;font-size:9.75px;color:#222">Cancellation Policy 7 days prior:100% charge</div>
<div class="a" style="left:1315.3px;top:582.4px;width:47.4px;height:17.2px;border:1px solid #bfe3f3;border-radius:2px;background:#fff"></div>
<div class="t" style="left:1325px;top:587.7px;font-size:9.2px;color:#777">Modify</div>

<!-- card 2 -->
<div class="a" style="left:483px;top:641.4px;width:893px;height:137px;border:1px solid #dedede;border-radius:2px"></div>
<div class="a" style="left:495.7px;top:655.4px;width:14px;height:14px;border-radius:50%;background:#8fd2ea"></div>
<div class="a" style="left:499.5px;top:659px;width:6.5px;height:3.5px;border-left:1.3px solid #fff;border-bottom:1.3px solid #fff;transform:rotate(-45deg)"></div>
<div class="t" style="left:517.2px;top:658.7px;font-size:10.15px;color:#777">Application period 2025.11.06~2099.12.31</div>
<div class="t" style="left:517.2px;top:680.7px;font-size:9.75px;color:#222">Cancellation Policy 7 days prior:100% charge</div>
<div class="t" style="left:517px;top:702.5px;font-size:8.5px;color:#999">option</div>
<div class="a" style="left:550px;top:706px;width:738px;height:1px;background:#e2e2e2"></div>
<div class="t" style="left:517.2px;top:723.7px;font-size:10.15px;color:#222">Application period 2025.11.06~2026.11.06</div>
<div class="t" style="left:517.2px;top:744.2px;font-size:9.75px;color:#222">Cancellation Policy 5 days prior:100% charge</div>
<div class="a" style="left:1315.3px;top:654.4px;width:47.4px;height:17.2px;border:1px solid #bfe3f3;border-radius:2px;background:#fff"></div>
<div class="t" style="left:1325px;top:659.7px;font-size:9.2px;color:#777">Modify</div>

<!-- new button -->
<div class="a" style="left:1337px;top:787px;width:38.5px;height:17.5px;border:1px solid #9fd6ec;border-radius:2px;background:#fff"></div>
<div class="t" style="left:1347.5px;top:791.5px;font-size:9.2px;color:#111">New</div>

<!-- footer buttons -->
<div class="a" style="left:1288px;top:825px;width:44px;height:18px;background:#8a9097;border-radius:2px"></div>
<div class="t" style="left:1300px;top:829.5px;font-size:9px;font-weight:700;color:#fff">Save</div>
<div class="a" style="left:1336.4px;top:825px;width:46.2px;height:18px;border:1px solid #dcdcdc;border-radius:2px;background:#fff"></div>
<div class="t" style="left:1348px;top:829.5px;font-size:9.2px;color:#111">Close</div>

</div></div>
</div>

</div>

<!-- red highlight box -->
<div class="a" style="left:429.5px;top:612px;width:957.5px;height:199px;border:5px solid #e41b1b"></div>
</body></html>
